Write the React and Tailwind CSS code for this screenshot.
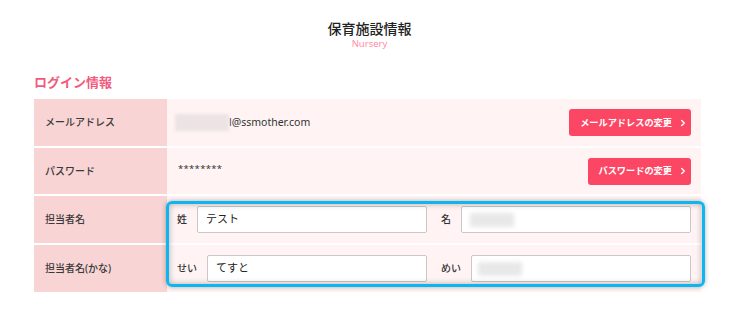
import React from "react";
import { ChevronRight } from "lucide-react";

const font = { fontFamily: '"Noto Sans", "Noto Sans CJK JP", sans-serif' };

function Label({ children }) {
  return (
    <div className="w-[133px] shrink-0 bg-[#f8d4d4] flex items-center pl-[11px] text-[10px] font-medium text-[#3a3a3a]">
      {children}
    </div>
  );
}

function Btn({ children }) {
  return (
    <button className="h-[27px] rounded-[3px] bg-[#fb4664] text-white text-[9.2px] font-bold flex items-center pl-[11px] pr-[3px] gap-[6px]">
      <span>{children}</span>
      <ChevronRight size={10} strokeWidth={3.5} />
    </button>
  );
}

function Field({ label, lw, children }) {
  return (
    <div className="flex-1 flex items-center">
      <span className={`${lw} shrink-0 text-[10px] font-medium text-[#333]`}>{label}</span>
      <div className="flex-1 h-[27px] bg-white border border-[#c8c8c8] rounded-[2px] flex items-center pl-[8px] text-[11px] text-[#222]">
        {children}
      </div>
    </div>
  );
}

export default function App() {
  return (
    <div style={font} className="w-[739px] h-[323px] bg-white overflow-hidden">
      <div className="pt-[20px] flex flex-col items-center">
        <div className="text-[14px] leading-[18px] font-medium text-[#222]">保育施設情報</div>
        <div className="text-[9.5px] leading-[12px] text-[#ff8ea5]">Nursery</div>
      </div>
      <div className="ml-[34px] mt-[23px] text-[13px] leading-[18px] font-bold text-[#f25a7e]">ログイン情報</div>
      <div className="relative ml-[34px] mt-[8px] w-[667px] flex flex-col gap-[2px]">
        <div className="flex h-[47px]">
          <Label>メールアドレス</Label>
          <div className="flex-1 bg-[#fff3f3] flex items-center justify-between pl-[8px] pr-[10px]">
            <div className="flex items-center text-[10.5px] text-[#333]">
              <span className="w-[54px] h-[17px] bg-[#ece4e4] blur-[1.5px]"></span>
              <span>l@ssmother.com</span>
            </div>
            <Btn>メールアドレスの変更</Btn>
          </div>
        </div>
        <div className="flex h-[46px]">
          <Label>パスワード</Label>
          <div className="flex-1 bg-[#fff3f3] flex items-center justify-between pl-[11px] pr-[10px]">
            <span className="text-[9.5px] text-[#333] tracking-[0.3px] -mt-[4px]">********</span>
            <Btn>パスワードの変更</Btn>
          </div>
        </div>
        <div className="flex h-[47px]">
          <Label>担当者名</Label>
          <div className="flex-1 bg-[#fff3f3] flex items-center gap-[14px] px-[10px]">
            <Field label="姓" lw="w-[20px]">テスト</Field>
            <Field label="名" lw="w-[20px]">
              <span className="w-[44px] h-[14px] bg-[#e8e8e8] blur-[2px]"></span>
            </Field>
          </div>
        </div>
        <div className="flex h-[47px]">
          <Label>担当者名(かな)</Label>
          <div className="flex-1 bg-[#fff3f3] flex items-center gap-[14px] px-[10px]">
            <Field label="せい" lw="w-[30px]">てすと</Field>
            <Field label="めい" lw="w-[30px]">
              <span className="ml-[-2px] w-[44px] h-[14px] bg-[#e8e8e8] blur-[2px]"></span>
            </Field>
          </div>
        </div>
        <div className="absolute left-[132px] top-[102px] w-[539px] h-[86px] border-[3px] border-[#0fb5ee] rounded-[6px] shadow-[0_0_5px_rgba(0,0,0,0.3),inset_0_0_6px_rgba(0,0,0,0.3)] pointer-events-none"></div>
      </div>
    </div>
  );
}
